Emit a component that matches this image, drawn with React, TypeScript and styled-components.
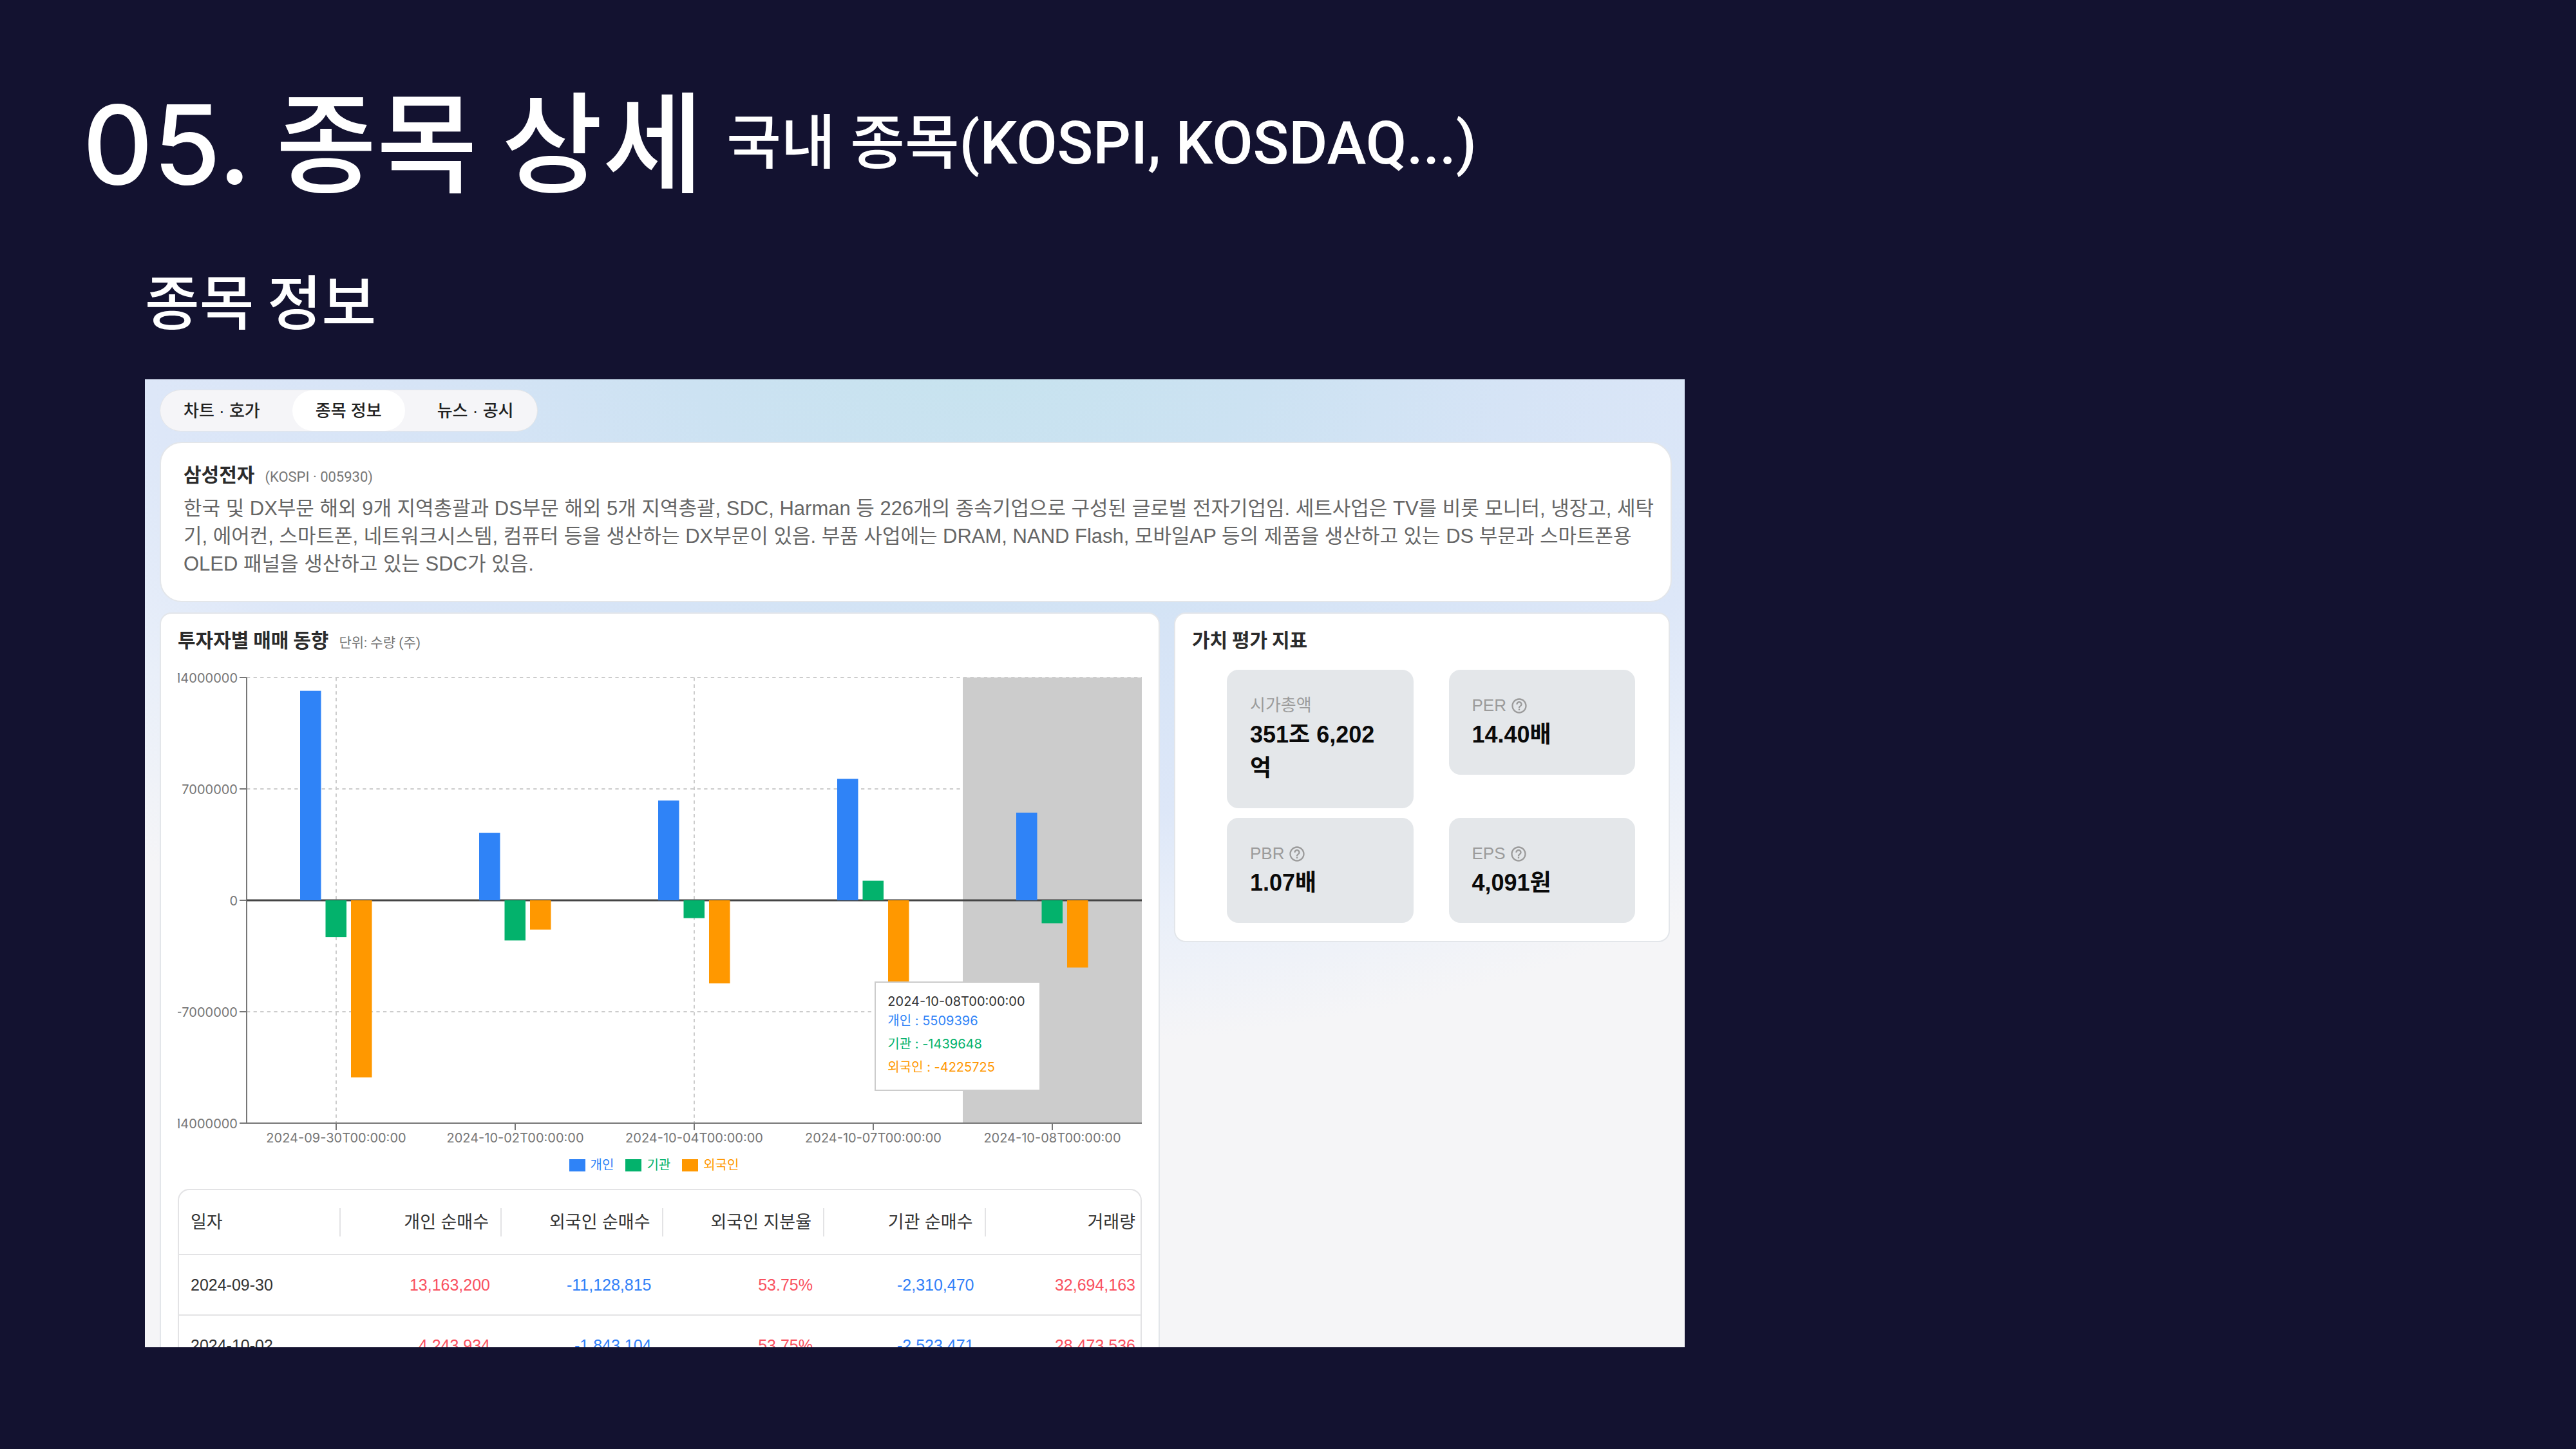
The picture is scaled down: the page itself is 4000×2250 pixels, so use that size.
import React from "react";
import styled, { createGlobalStyle } from "styled-components";
import { MdHelpOutline } from "react-icons/md";

const displayFont = `"Noto Sans CJK KR", "Noto Sans", sans-serif`;
const bodyFont = `"Liberation Sans", "Noto Sans CJK KR", sans-serif`;
const chartFont = `Inter, "Noto Sans CJK KR", sans-serif`;

const BLUE = "#2f83f7";
const GREEN = "#03b26c";
const ORANGE = "#ff9800";

const GlobalStyle = createGlobalStyle`
  * { box-sizing: border-box; }
  body { margin: 0; background: #131230; }
`;

const Page = styled.div`
  display: flex;
  flex-direction: column;
  height: 100vh;
  overflow: hidden;
  padding: 112px 0 158px;
  background: #131230;
  color: #fff;
  font-family: ${displayFont};
`;

const Header = styled.header`
  display: flex;
  align-items: center;
  gap: 36px;
  padding-left: 128px;
  white-space: nowrap;
`;

const Title = styled.h1`
  margin: 0;
  font-size: 170px;
  line-height: 200px;
  font-weight: 500;
`;

const TitleNumber = styled.span`
  font-family: ${chartFont};
`;

const Subtitle = styled.p`
  margin: 0;
  padding-top: 10px;
  font-family: Roboto, "Noto Sans CJK KR", sans-serif;
  font-size: 92px;
  line-height: 180px;
  font-weight: 500;
`;

const SectionTitle = styled.h2`
  margin: 80px 0 65px 225px;
  font-size: 92px;
  line-height: 120px;
  font-weight: 500;
`;

const Stage = styled.div`
  flex: 1;
  min-height: 0;
  display: grid;
  grid-template-columns: minmax(0, 2391fr) 1384fr;
  grid-template-rows: minmax(0, 1fr);
  padding-left: 225px;
`;

const Viewport = styled.main`
  overflow: hidden;
  padding: 16px 20px 0 23px;
  color: #333;
  font-family: ${bodyFont};
  background:
    radial-gradient(ellipse 1900px 1100px at 54% -4%, #c6e3ee 0%, #cce2f2 24%, #d6e4f6 45%, #dde7f8 68%, #e9eff9 82%, #f5f5f7 100%),
    #f5f5f7;
`;

const Tabs = styled.nav`
  display: flex;
  width: fit-content;
  height: 65px;
  border: 1px solid #e3e5e8;
  border-radius: 33px;
  background: #f5f5f8;
  overflow: hidden;
`;

const Tab = styled.button<{ $active?: boolean }>`
  border: 0;
  border-radius: 32px;
  padding: 0 36px;
  margin-right: 14px;
  background: ${(p) => (p.$active ? "#fff" : "transparent")};
  color: #222;
  font-family: ${bodyFont};
  font-size: 26px;
  font-weight: 500;
  line-height: 60px;

  &:last-child { margin-right: 0; }
`;

const Card = styled.section`
  background: #fff;
  border: 2px solid #e3e6ea;
  border-radius: 18px;
`;

const CompanyCard = styled(Card)`
  margin-top: 16px;
  padding: 26px 20px 36px 35px;
  border-radius: 34px;
`;

const CardHead = styled.div`
  display: flex;
  align-items: baseline;
  gap: 16px;
  height: 42px;
  font-family: ${displayFont};
  line-height: 42px;
`;

const CardTitle = styled.h3`
  margin: 0;
  color: #2b2b2b;
  font-size: 30px;
  font-weight: 700;
`;

const CardNote = styled.span`
  color: #777;
  font-family: Roboto, "Noto Sans CJK KR", sans-serif;
  font-size: 22px;
`;

const ChartUnit = styled(CardNote)`
  font-size: 21px;
`;

const Description = styled.p`
  margin: 12px 0 0;
  color: #666;
  font-size: 31px;
  line-height: 43px;
`;

const Columns = styled.div`
  display: grid;
  grid-template-columns: minmax(0, 1553fr) minmax(0, 770fr);
  align-items: start;
  gap: 22px;
  margin-top: 16px;
  padding-right: 3px;
`;

const TrendCard = styled(Card)`
  padding: 18px 26px 80px;
`;

const ChartArea = styled.div`
  position: relative;
  margin-top: 12px;
`;

const ChartSvg = styled.svg`
  display: block;
  width: 100%;
  height: auto;

  text {
    font-family: ${chartFont};
    font-size: 20px;
    fill: #777;
  }
`;

const Tooltip = styled.div`
  position: absolute;
  left: 72.3%;
  top: 65.7%;
  padding: 17px 22px 17px 18px;
  border: 2px solid #ccc;
  background: #fff;
  color: #333;
  font-family: ${chartFont};
  font-size: 20px;
  white-space: nowrap;
`;

const TooltipLabel = styled.p`
  margin: 0;
  line-height: 24px;
`;

const TooltipList = styled.ul`
  margin: 0;
  padding: 0;
  list-style: none;
  line-height: 36px;
`;

const TooltipItem = styled.li<{ $color: string }>`
  color: ${(p) => p.$color};
`;

const Legend = styled.ul`
  display: flex;
  justify-content: center;
  margin: 9px 0 22px;
  padding: 0;
  list-style: none;
  font-family: ${chartFont};
  font-size: 20px;
  line-height: 30px;
`;

const LegendItem = styled.li<{ $color: string }>`
  display: flex;
  align-items: center;
  gap: 8px;
  margin-right: 18px;
  color: ${(p) => p.$color};

  &::before {
    content: "";
    width: 25px;
    height: 19px;
    background: ${(p) => p.$color};
  }
`;

const TableFrame = styled.div`
  overflow: hidden;
  border: 2px solid #e3e3e5;
  border-radius: 18px;
`;

const Table = styled.table`
  width: calc(100% + 10px);
  border-collapse: collapse;
  table-layout: fixed;
  color: #333;
  font-size: 25px;
`;

const HeadCell = styled.th`
  height: 100px;
  padding: 0;
  border-bottom: 2px solid #e3e3e5;
  font-size: 27px;
  font-weight: 400;
  text-align: right;

  &:first-child { text-align: left; }

  & > span {
    display: block;
    padding: 0 18px;
    border-right: 2px solid #e3e3e5;
    line-height: 44px;
  }

  &:last-child > span { border-right: 0; }
`;

const Cell = styled.td<{ $tone?: "up" | "down" }>`
  height: 94px;
  padding: 0 18px;
  border-bottom: 2px solid #e3e3e5;
  color: ${(p) => (p.$tone === "up" ? "#f9515f" : p.$tone === "down" ? "#3180f8" : "#333")};
  text-align: right;

  &:first-child { text-align: left; }
`;

const MetricsCard = styled(Card)`
  padding: 18px 52px 28px 26px;
`;

const MetricGrid = styled.div`
  display: grid;
  grid-template-columns: repeat(2, minmax(0, 1fr));
  align-items: start;
  gap: 15px 55px;
  margin: 27px 0 0 54px;
`;

const Metric = styled.div`
  padding: 36px;
  border-radius: 18px;
  background: #e4e7ea;
`;

const MetricLabel = styled.div`
  display: flex;
  align-items: center;
  gap: 6px;
  color: #9b9b9b;
  font-size: 26px;
  line-height: 39px;

  svg { width: 28px; height: 28px; }
`;

const MetricValue = styled.div`
  color: #0a0a0a;
  font-size: 36px;
  font-weight: 700;
  line-height: 52px;
`;

const trend = [
  { day: "2024-09-30", values: [13163200, -2310470, -11128815] },
  { day: "2024-10-02", values: [4243934, -2523471, -1843104] },
  { day: "2024-10-04", values: [6270000, -1120000, -5220000] },
  { day: "2024-10-07", values: [7630000, 1230000, -5300000] },
  { day: "2024-10-08", values: [5509396, -1439648, -4225725] },
];

const series = [
  { name: "개인", color: BLUE },
  { name: "기관", color: GREEN },
  { name: "외국인", color: ORANGE },
];

const columns = ["일자", "개인 순매수", "외국인 순매수", "외국인 지분율", "기관 순매수", "거래량"];

const rows = [
  ["2024-09-30", "13,163,200", "-11,128,815", "53.75%", "-2,310,470", "32,694,163"],
  ["2024-10-02", "4,243,934", "-1,843,104", "53.75%", "-2,523,471", "28,473,536"],
];

const metrics = [
  { label: "시가총액", value: "351조 6,202억", help: false },
  { label: "PER", value: "14.40배", help: true },
  { label: "PBR", value: "1.07배", help: true },
  { label: "EPS", value: "4,091원", help: true },
];

const plot = { left: 107, right: 1497, top: 27, bottom: 719 };
const zeroY = (plot.top + plot.bottom) / 2;
const band = (plot.right - plot.left) / trend.length;
const scaleY = (v: number) => zeroY - (v / 14000000) * (zeroY - plot.top);
const centerX = (i: number) => plot.left + band * (i + 0.5);

function TrendChart() {
  return (
    <ChartSvg viewBox="0 0 1497 760" role="img" aria-label="투자자별 매매 동향">
      <g stroke="#ccc" strokeWidth="2" strokeDasharray="5.3 5.3">
        {[14000000, 7000000, -7000000].map((v) => (
          <line key={v} x1={plot.left} x2={plot.right} y1={scaleY(v)} y2={scaleY(v)} />
        ))}
        {[0, 2].map((i) => (
          <line key={i} x1={centerX(i)} x2={centerX(i)} y1={plot.top} y2={plot.bottom} />
        ))}
      </g>
      <rect x={plot.right - band} y={plot.top} width={band} height={plot.bottom - plot.top} fill="#ccc" />
      <g stroke="#777" strokeWidth="2">
        <line x1={plot.left} x2={plot.left} y1={plot.top} y2={plot.bottom} />
        <line x1={plot.left} x2={plot.right} y1={plot.bottom} y2={plot.bottom} />
        {[14000000, 7000000, 0, -7000000, -14000000].map((v) => (
          <line key={v} x1={plot.left - 11} x2={plot.left} y1={scaleY(v)} y2={scaleY(v)} />
        ))}
        {trend.map((d, i) => (
          <line key={d.day} x1={centerX(i)} x2={centerX(i)} y1={plot.bottom} y2={plot.bottom + 11} />
        ))}
      </g>
      <line x1={plot.left} x2={plot.right} y1={zeroY} y2={zeroY} stroke="#444" strokeWidth="3" />
      {trend.map((d, i) =>
        d.values.map((v, s) => (
          <rect
            key={d.day + s}
            x={centerX(i) - 56 + s * 39.5}
            y={Math.min(zeroY, scaleY(v))}
            width="32.5"
            height={Math.abs(scaleY(v) - zeroY)}
            fill={series[s].color}
          />
        ))
      )}
      {[14000000, 7000000, 0, -7000000, -14000000].map((v) => (
        <text key={v} x={plot.left - 14} y={scaleY(v) + 8} textAnchor="end">
          {v}
        </text>
      ))}
      {trend.map((d, i) => (
        <text key={d.day} x={centerX(i)} y={plot.bottom + 30} textAnchor="middle">
          {d.day}T00:00:00
        </text>
      ))}
    </ChartSvg>
  );
}

const tone = (value: string, index: number) =>
  index === 0 ? undefined : value.startsWith("-") ? "down" : "up";

export default function App() {
  const hovered = trend[trend.length - 1];
  return (
    <Page>
      <GlobalStyle />
      <Header>
        <Title><TitleNumber>05.</TitleNumber> 종목 상세</Title>
        <Subtitle>국내 종목(KOSPI, KOSDAQ...)</Subtitle>
      </Header>
      <SectionTitle>종목 정보</SectionTitle>
      <Stage>
        <Viewport>
          <Tabs>
            <Tab type="button">차트 · 호가</Tab>
            <Tab type="button" $active>종목 정보</Tab>
            <Tab type="button">뉴스 · 공시</Tab>
          </Tabs>
          <CompanyCard>
            <CardHead>
              <CardTitle>삼성전자</CardTitle>
              <CardNote>(KOSPI · 005930)</CardNote>
            </CardHead>
            <Description>
              한국 및 DX부문 해외 9개 지역총괄과 DS부문 해외 5개 지역총괄, SDC, Harman 등 226개의 종속기업으로 구성된 글로벌 전자기업임. 세트사업은 TV를 비롯 모니터, 냉장고, 세탁기, 에어컨, 스마트폰, 네트워크시스템, 컴퓨터 등을 생산하는 DX부문이 있음. 부품 사업에는 DRAM, NAND Flash, 모바일AP 등의 제품을 생산하고 있는 DS 부문과 스마트폰용 OLED 패널을 생산하고 있는 SDC가 있음.
            </Description>
          </CompanyCard>
          <Columns>
            <TrendCard>
              <CardHead>
                <CardTitle>투자자별 매매 동향</CardTitle>
                <ChartUnit>단위: 수량 (주)</ChartUnit>
              </CardHead>
              <ChartArea>
                <TrendChart />
                <Tooltip>
                  <TooltipLabel>{hovered.day}T00:00:00</TooltipLabel>
                  <TooltipList>
                    {series.map((s, i) => (
                      <TooltipItem key={s.name} $color={s.color}>
                        {s.name} : {hovered.values[i]}
                      </TooltipItem>
                    ))}
                  </TooltipList>
                </Tooltip>
              </ChartArea>
              <Legend>
                {series.map((s) => (
                  <LegendItem key={s.name} $color={s.color}>{s.name}</LegendItem>
                ))}
              </Legend>
              <TableFrame>
                <Table>
                  <thead>
                    <tr>
                      {columns.map((c) => (
                        <HeadCell key={c} scope="col"><span>{c}</span></HeadCell>
                      ))}
                    </tr>
                  </thead>
                  <tbody>
                    {rows.map((r) => (
                      <tr key={r[0]}>
                        {r.map((v, i) => (
                          <Cell key={i} $tone={tone(v, i)}>{v}</Cell>
                        ))}
                      </tr>
                    ))}
                  </tbody>
                </Table>
              </TableFrame>
            </TrendCard>
            <MetricsCard>
              <CardHead>
                <CardTitle>가치 평가 지표</CardTitle>
              </CardHead>
              <MetricGrid>
                {metrics.map((m) => (
                  <Metric key={m.label}>
                    <MetricLabel>
                      {m.label}
                      {m.help && <MdHelpOutline aria-hidden />}
                    </MetricLabel>
                    <MetricValue>{m.value}</MetricValue>
                  </Metric>
                ))}
              </MetricGrid>
            </MetricsCard>
          </Columns>
        </Viewport>
      </Stage>
    </Page>
  );
}
